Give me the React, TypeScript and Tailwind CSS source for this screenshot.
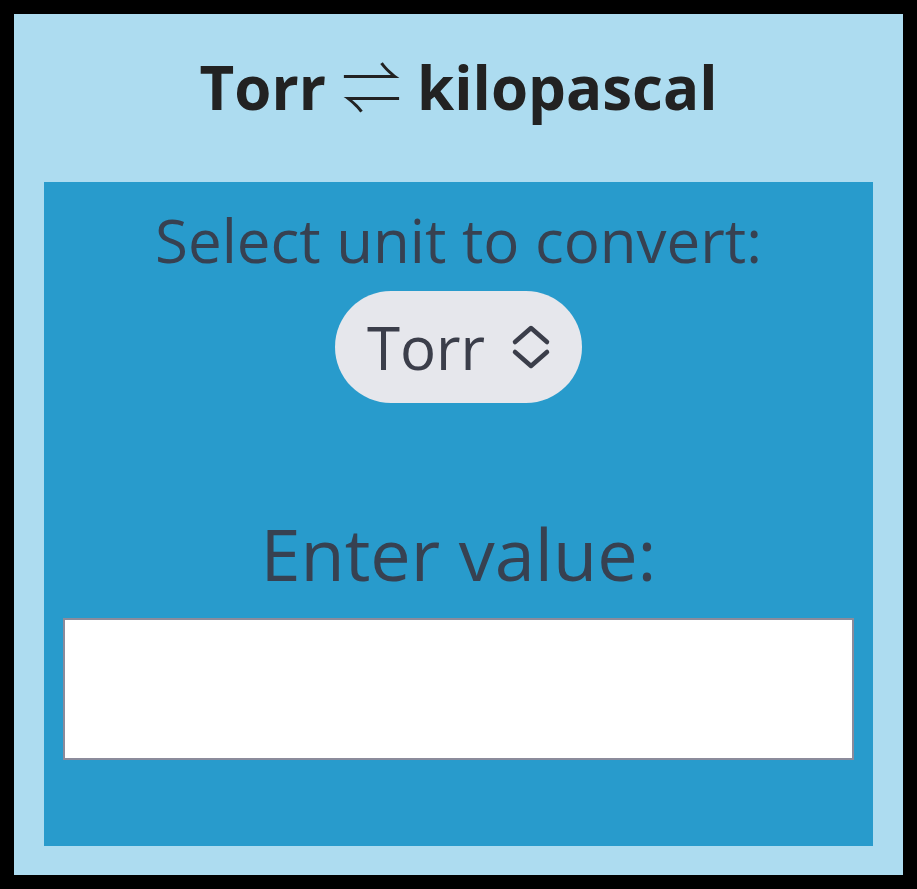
import React from 'react';

const ChevronsUpDown = () => (
  <svg width="40" height="46" viewBox="0 0 40 46" fill="none" stroke="currentColor" strokeWidth="4.5" strokeLinecap="round" strokeLinejoin="round">
    <path d="M4 18 L20 4 L36 18" />
    <path d="M4 28 L20 42 L36 28" />
  </svg>
);

export default function App() {
  return (
    <div className="w-[917px] h-[889px] bg-black p-[14px] font-['Open_Sans',sans-serif]">
      <div className="h-full bg-[#addcf0] flex flex-col px-[30px] pb-[29px]">
        {/* Title */}
        <div className="h-[168px] pb-[26px] flex items-center justify-center">
          <h1 className="text-[60px] leading-none font-bold text-[#222222] whitespace-nowrap">
            Torr <span className="font-light font-['Noto_Sans_CJK_JP','DejaVu_Sans',sans-serif]">⇌</span> kilopascal
          </h1>
        </div>

        {/* Converter panel */}
        <div className="flex-1 bg-[#289bcc] flex flex-col items-center pt-[17px] px-[19px]">
          <label className="text-[60px] leading-[82px] text-[#374151]">Select unit to convert:</label>
          <button className="mt-[10px] h-[112px] rounded-full bg-[#e6e7ec] flex items-center gap-[26px] pl-[32px] pr-[31px] text-[#3b3e4a]">
            <span className="text-[60px] leading-none">Torr</span>
            <ChevronsUpDown />
          </button>

          <label className="mt-[101px] text-[72px] leading-[98px] text-[#374151]">Enter value:</label>
          <input
            type="text"
            className="mt-[16px] w-full h-[142px] bg-white border-2 border-[#8b8b9b] outline-none"
          />
        </div>
      </div>
    </div>
  );
}
